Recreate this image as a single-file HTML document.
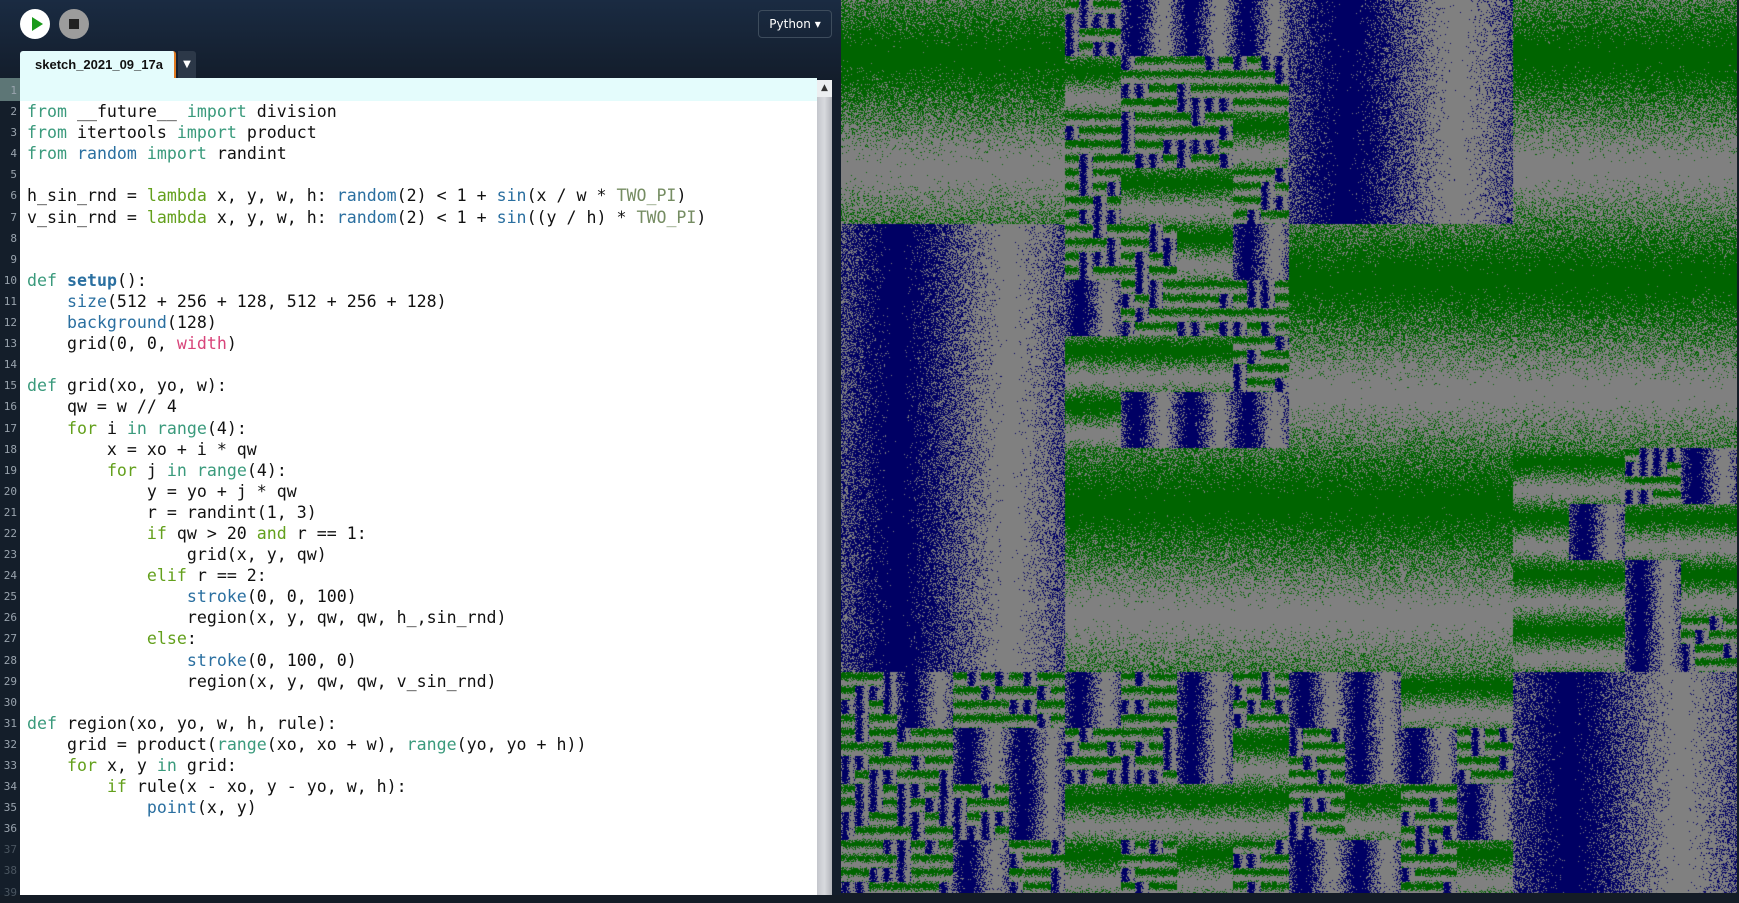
<!DOCTYPE html>
<html><head><meta charset="utf-8">
<style>
*{margin:0;padding:0;box-sizing:border-box}
html,body{width:1739px;height:895px;overflow:hidden;background:#141c26}
#left{position:absolute;left:0;top:0;width:841px;height:895px;background:linear-gradient(#1a2b42,#131d2b 80px,#131d2b)}
.play{position:absolute;left:20px;top:9px;width:30px;height:30px;border-radius:50%;background:#fff}
.play:after{content:"";position:absolute;left:12px;top:8px;border-left:11px solid #1a9a1a;border-top:7px solid transparent;border-bottom:7px solid transparent}
.stop{position:absolute;left:59px;top:9px;width:30px;height:30px;border-radius:50%;background:#9c9c9c}
.stop:after{content:"";position:absolute;left:10px;top:10px;width:10px;height:10px;background:#222}
.tab{position:absolute;left:20px;top:51px;width:156px;height:27px;background:#e4fcfc;border-right:2px solid #e07a20;border-radius:3px 3px 0 0;font:bold 13px "Liberation Sans",sans-serif;color:#111;padding:6px 0 0 15px}
.dd{position:absolute;left:178px;top:51px;width:18px;height:27px;background:#2c3848;border-radius:0 3px 0 0;color:#fff;font:10px "DejaVu Sans",sans-serif;text-align:center;line-height:27px}
.py{position:absolute;left:758px;top:10px;width:74px;height:28px;border:1px solid #3d4c5c;border-radius:4px;color:#fff;font:12px "DejaVu Sans",sans-serif;line-height:26px;text-align:center}
#gut{position:absolute;left:0;top:78px;width:20px;height:817px;background:#141e2a}
#ed{position:absolute;left:20px;top:78px;width:797px;height:817px;background:#fff}
.hl{position:absolute;left:0;top:78px;width:817px;height:23px;background:#e4fcfc}
.hlg{position:absolute;left:0;top:78px;width:20px;height:23px;background:#5d7676}
#nums{position:absolute;left:0;top:80px;width:17px;font:11px "DejaVu Sans Mono",monospace;color:#9aa4ae;text-align:right;line-height:21.1px}
#code{position:absolute;left:27px;top:80px;font:16.6px "DejaVu Sans Mono",monospace;color:#111;line-height:21.1px;white-space:pre}
.k{color:#3a9a7c}.o{color:#63a01c}.f{color:#2a6fa0}.b{color:#2a6fa0;font-weight:bold}.c{color:#758c62}.p{color:#d8447a}
#sb{position:absolute;left:817px;top:80px;width:15px;height:815px;background:linear-gradient(90deg,#c4c6cc,#d8dade 50%,#b0b2b8)}
#sbu{position:absolute;left:817px;top:80px;width:15px;height:17px;background:#eceef0;color:#333;font:9px "DejaVu Sans",sans-serif;text-align:center;line-height:17px}
#cv{position:absolute;left:841px;top:0;width:896px;height:893px;overflow:hidden;background:#808080}
</style></head><body>
<div id="left">
<div class="play"></div><div class="stop"></div>
<div class="tab">sketch_2021_09_17a</div><div class="dd">▼</div>
<div class="py">Python ▾</div>
<div id="gut"></div><div id="ed"></div>
<div class="hl"></div><div class="hlg"></div>
<div id="nums">1<br>2<br>3<br>4<br>5<br>6<br>7<br>8<br>9<br>10<br>11<br>12<br>13<br>14<br>15<br>16<br>17<br>18<br>19<br>20<br>21<br>22<br>23<br>24<br>25<br>26<br>27<br>28<br>29<br>30<br>31<br>32<br>33<br>34<br>35<br>36<br><span style="color:#4a5560">37<br>38<br>39</span></div>
<div id="code">
<span class="k">from</span> __future__ <span class="k">import</span> division
<span class="k">from</span> itertools <span class="k">import</span> product
<span class="k">from</span> <span class="f">random</span> <span class="k">import</span> randint

h_sin_rnd = <span class="o">lambda</span> x, y, w, h: <span class="f">random</span>(2) &lt; 1 + <span class="f">sin</span>(x / w * <span class="c">TWO_PI</span>)
v_sin_rnd = <span class="o">lambda</span> x, y, w, h: <span class="f">random</span>(2) &lt; 1 + <span class="f">sin</span>((y / h) * <span class="c">TWO_PI</span>)


<span class="k">def</span> <span class="b">setup</span>():
    <span class="f">size</span>(512 + 256 + 128, 512 + 256 + 128)
    <span class="f">background</span>(128)
    grid(0, 0, <span class="p">width</span>)

<span class="k">def</span> grid(xo, yo, w):
    qw = w // 4
    <span class="o">for</span> i <span class="k">in</span> <span class="k">range</span>(4):
        x = xo + i * qw
        <span class="o">for</span> j <span class="k">in</span> <span class="k">range</span>(4):
            y = yo + j * qw
            r = randint(1, 3)
            <span class="o">if</span> qw &gt; 20 <span class="o">and</span> r == 1:
                grid(x, y, qw)
            <span class="o">elif</span> r == 2:
                <span class="f">stroke</span>(0, 0, 100)
                region(x, y, qw, qw, h_,sin_rnd)
            <span class="o">else</span>:
                <span class="f">stroke</span>(0, 100, 0)
                region(x, y, qw, qw, v_sin_rnd)

<span class="k">def</span> region(xo, yo, w, h, rule):
    grid = product(<span class="k">range</span>(xo, xo + w), <span class="k">range</span>(yo, yo + h))
    <span class="o">for</span> x, y <span class="k">in</span> grid:
        <span class="o">if</span> rule(x - xo, y - yo, w, h):
            <span class="f">point</span>(x, y)
</div>
<div id="sb"></div><div id="sbu">▲</div>
</div>
<div id="cv"><canvas id="c" width="896" height="896"></canvas></div>
<script>
(function(){
var s=12345;function rnd(){s|=0;s=s+0x6D2B79F5|0;var t=Math.imul(s^s>>>15,1|s);t=t+Math.imul(t^t>>>7,61|t)^t;return((t^t>>>14)>>>0)/4294967296;}
var cx=document.getElementById('c').getContext('2d');
var im=cx.createImageData(896,896),d=im.data;
for(var i=0;i<d.length;i+=4){d[i]=128;d[i+1]=128;d[i+2]=128;d[i+3]=255;}
function fill(x0,y0,w,t){
 for(var y=0;y<w;y++)for(var x=0;x<w;x++){
  var u=(t=='B'?x:y)/w;var p=(1+Math.sin(u*2*Math.PI))/2;
  if(rnd()<p){var k=((y0+y)*896+x0+x)*4;
   if(t=='B'){d[k]=0;d[k+1]=0;d[k+2]=100;}else{d[k]=0;d[k+1]=100;d[k+2]=0;}}
 }}
function small(x0,y0){for(var i=0;i<4;i++)for(var j=0;j<4;j++)fill(x0+i*14,y0+j*14,14,rnd()<0.34?'B':'G');}
var top=["GBBS","SSGS","BGGS","GGSB"];
var sub={"1,0":["SGSS","BSSG","BSSG","BSGS"],"1,1":["SBGG","SSGB","GSGB","BSSB"],
"0,3":["SSSS","BSSS","SBSB","SBBS"],"1,3":["BSGG","SSGS","BBGG","SGGS"],
"2,3":["BSSB","BBGB","GBSS","GSBG"],"3,2":["GGGG","GBGG","SGBB","BGGS"]};
for(var i=0;i<4;i++)for(var j=0;j<4;j++){
 var t=top[i][j],X=i*224,Y=j*224;
 if(t!='S'){fill(X,Y,224,t);continue;}
 var m=sub[i+","+j];
 for(var a=0;a<4;a++)for(var b=0;b<4;b++){
  var tt=m[a][b],x=X+a*56,y=Y+b*56;
  if(tt=='S')small(x,y);else fill(x,y,56,tt);
 }}
cx.putImageData(im,0,0);
})();
</script>
</body></html>
